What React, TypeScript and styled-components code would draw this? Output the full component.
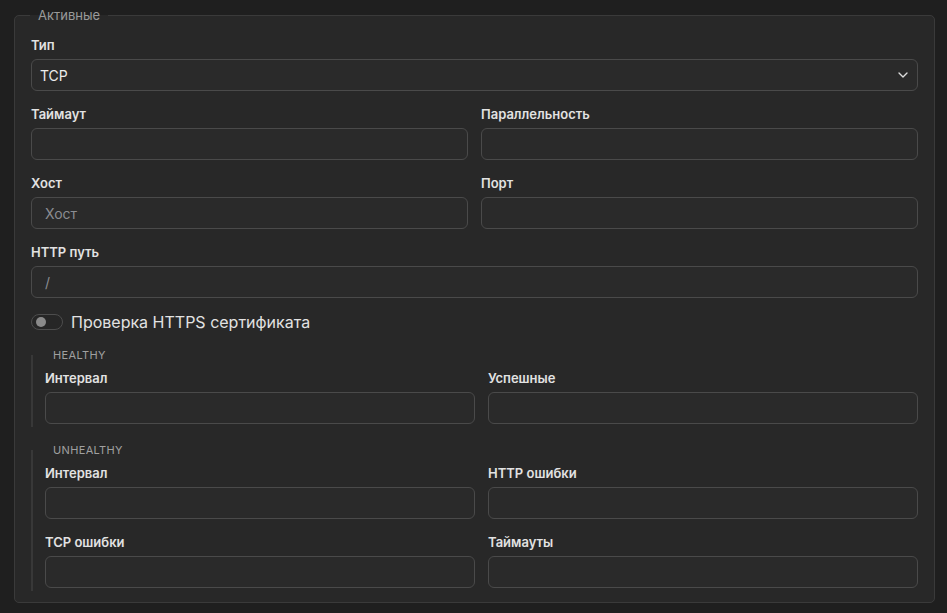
import styled, { createGlobalStyle } from 'styled-components';
import { ChevronDown } from 'lucide-react';

const GlobalStyle = createGlobalStyle`
  html, body {
    margin: 0;
    padding: 0;
    background: #1f1f1f;
    font-family: Inter, 'Noto Sans', sans-serif;
    color: #e4e4e4;
  }
  * { box-sizing: border-box; }
`;

const Page = styled.div`
  padding: 7px 12px 10px 14px;
`;

const Group = styled.fieldset`
  margin: 0;
  padding: 13px 16px 11px 16px;
  border: 1px solid #3a3a3a;
  border-radius: 5px;
  background: #282828;
  display: flex;
  flex-direction: column;
  gap: 14px;
`;

const GroupLegend = styled.legend`
  padding: 0 8px;
  margin-left: -1px;
  font-size: 13px;
  line-height: 16px;
  color: #9a9a9a;
`;

const Grid = styled.div`
  display: grid;
  grid-template-columns: 1fr 1fr;
  column-gap: 13px;
  row-gap: 14px;
`;

const Field = styled.div<{ $full?: boolean }>`
  display: flex;
  flex-direction: column;
  gap: 5px;
  grid-column: ${(p) => (p.$full ? '1 / -1' : 'auto')};
`;

const Label = styled.label`
  font-size: 13px;
  line-height: 18px;
  font-weight: 600;
  color: #e2e2e2;
`;

const Input = styled.input`
  height: 32px;
  width: 100%;
  padding: 0 13px;
  border: 1px solid #4a4a4a;
  border-radius: 6px;
  background: #2a2a2a;
  color: #e4e4e4;
  font-family: inherit;
  font-size: 14px;
  outline: none;

  &::placeholder {
    color: #8b8d92;
  }
`;

const SelectBox = styled.div`
  position: relative;
  height: 32px;
  display: flex;
  align-items: center;
  padding: 0 8px;
  border: 1px solid #4a4a4a;
  border-radius: 6px;
  background: #2a2a2a;
  font-size: 14px;
  color: #ececec;
`;

const Chevron = styled(ChevronDown)`
  position: absolute;
  right: 6px;
  top: 7px;
  color: #dcdcdc;
`;

const ToggleRow = styled.label`
  display: flex;
  align-items: center;
  gap: 8px;
  font-size: 16px;
  line-height: 20px;
  color: #e2e2e2;
`;

const Track = styled.span`
  position: relative;
  width: 32px;
  height: 16px;
  border: 1px solid #4d4d4d;
  border-radius: 8px;
  background: #262626;
`;

const Knob = styled.span`
  position: absolute;
  left: 4px;
  top: 2px;
  width: 10px;
  height: 10px;
  border-radius: 50%;
  background: #8a8a8a;
`;

const Section = styled.fieldset`
  margin: 0;
  padding: 0 0 3px 12px;
  border: none;
  border-left: 2px solid #383838;
  min-width: 0;
`;

const SectionLegend = styled.legend`
  padding: 0 8px;
  font-size: 11px;
  line-height: 14px;
  letter-spacing: 0.35px;
  text-transform: uppercase;
  color: #a0a0a0;
  margin-bottom: 7px;
`;

const Sections = styled.div`
  display: flex;
  flex-direction: column;
  gap: 16px;
  margin-top: 2px;
`;

interface TextFieldProps {
  label: string;
  placeholder?: string;
  full?: boolean;
}

const TextField = ({ label, placeholder, full }: TextFieldProps) => (
  <Field $full={full}>
    <Label>{label}</Label>
    <Input placeholder={placeholder} />
  </Field>
);

export default function App() {
  return (
    <Page>
      <GlobalStyle />
      <Group>
        <GroupLegend>Активные</GroupLegend>
        <Grid>
          <Field $full>
            <Label>Тип</Label>
            <SelectBox>
              TCP
              <Chevron size={16} strokeWidth={2} />
            </SelectBox>
          </Field>
          <TextField label="Таймаут" />
          <TextField label="Параллельность" />
          <TextField label="Хост" placeholder="Хост" />
          <TextField label="Порт" />
          <TextField label="HTTP путь" placeholder="/" full />
        </Grid>
        <ToggleRow>
          <Track>
            <Knob />
          </Track>
          Проверка HTTPS сертификата
        </ToggleRow>
        <Sections>
          <Section>
            <SectionLegend>Healthy</SectionLegend>
            <Grid>
              <TextField label="Интервал" />
              <TextField label="Успешные" />
            </Grid>
          </Section>
          <Section>
            <SectionLegend>Unhealthy</SectionLegend>
            <Grid>
              <TextField label="Интервал" />
              <TextField label="HTTP ошибки" />
              <TextField label="TCP ошибки" />
              <TextField label="Таймауты" />
            </Grid>
          </Section>
        </Sections>
      </Group>
    </Page>
  );
}
